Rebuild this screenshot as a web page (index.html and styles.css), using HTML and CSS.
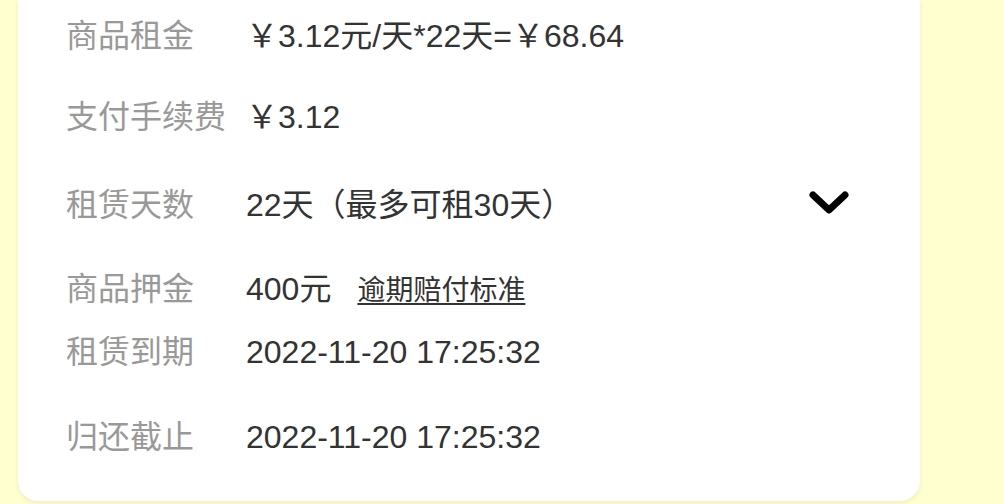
FILE: index.html
```html
<!DOCTYPE html>
<html lang="zh-CN">
<head>
<meta charset="utf-8">
<title>租赁详情</title>
<link rel="stylesheet" href="styles.css">
</head>
<body>
<div class="page">
  <div class="card">
    <div class="row row-1">
      <span class="label">商品租金</span>
      <span class="value">￥3.12元/天*22天=￥68.64</span>
    </div>
    <div class="row row-2">
      <span class="label">支付手续费</span>
      <span class="value">￥3.12</span>
    </div>
    <div class="row row-3">
      <span class="label">租赁天数</span>
      <span class="value">22天（最多可租30天）</span>
      <svg class="chevron" width="40" height="26" viewBox="0 0 40 26" aria-hidden="true">
        <path d="M4 5 L20 20 L36 5" fill="none" stroke="#000" stroke-width="7" stroke-linecap="round" stroke-linejoin="round"/>
      </svg>
    </div>
    <div class="row row-4">
      <span class="label">商品押金</span>
      <span class="value">400元</span>
      <a class="link">逾期赔付标准</a>
    </div>
    <div class="row row-5">
      <span class="label">租赁到期</span>
      <span class="value">2022-11-20 17:25:32</span>
    </div>
    <div class="row row-6">
      <span class="label">归还截止</span>
      <span class="value">2022-11-20 17:25:32</span>
    </div>
  </div>
</div>
</body>
</html>
```

FILE: styles.css
```css
html, body {
  margin: 0;
  padding: 0;
  background: #ffffd0;
  height: 100%;
  overflow: hidden;
}

.page {
  padding-left: 18px;
  width: 902px;
}

.card {
  background: #ffffff;
  border-radius: 0 0 20px 20px;
  box-shadow: 0 2px 5px rgba(0, 0, 0, 0.08);
  padding: 16px 0 44px 48px;
  display: flex;
  flex-direction: column;
  font-family: "Liberation Sans", "Noto Sans CJK SC", sans-serif;
  font-size: 32px;
  color: #333333;
}

.row {
  display: flex;
  align-items: baseline;
  height: 40px;
  line-height: 40px;
  white-space: nowrap;
}

.row-2 { margin-top: 41px; }
.row-3 { margin-top: 48px; }
.row-4 { margin-top: 44px; }
.row-5 { margin-top: 23px; }
.row-6 { margin-top: 45px; }

.label {
  width: 180px;
  flex: none;
  color: #999999;
}

.value {
  color: #333333;
}

.link {
  margin-left: 26px;
  font-size: 28px;
  color: #333333;
  text-decoration: underline;
  text-underline-offset: 3px;
  text-decoration-thickness: 2px;
}

.chevron {
  margin-left: auto;
  margin-right: 71px;
  align-self: center;
  position: relative;
  top: -2px;
}
```
